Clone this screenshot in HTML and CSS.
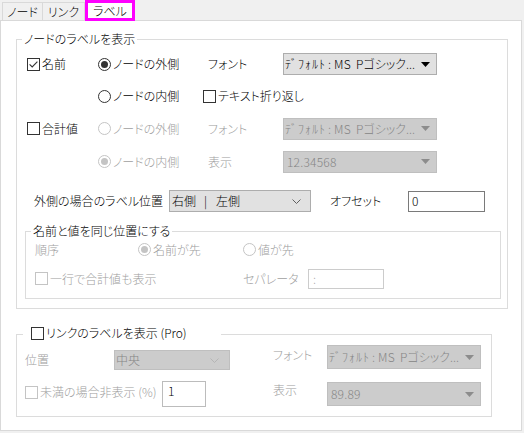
FILE: index.html
```html
<!DOCTYPE html>
<html lang="ja">
<head>
<meta charset="utf-8">
<link rel="stylesheet" href="styles.css">
</head>
<body>
<div class="tabs">
  <div class="tab t1">ノード</div>
  <div class="tab t2">リンク</div>
  <div class="tab active">ラベル</div>
</div>
<div class="panel">
  <div class="group g1">
    <div class="gtitle">ノードのラベルを表示</div>
    <div class="grid1">
      <label class="opt"><svg class="box" width="13" height="13" viewBox="0 0 13 13"><rect x="0.5" y="0.5" width="12" height="12" fill="#fff" stroke="#333"/><path d="M2.6 6.4 L5.2 9 L10.4 3.6" fill="none" stroke="#333" stroke-width="1.1"/></svg>名前</label>
      <label class="opt"><svg class="rad" width="13" height="13" viewBox="0 0 13 13"><circle cx="6.5" cy="6.5" r="6" fill="#fff" stroke="#333"/><circle cx="6.5" cy="6.5" r="3.5" fill="#333"/></svg>ノードの外側</label>
      <span class="lbl">フォント</span>
      <div class="dd"><span class="ddt"><span class="hk">ﾃﾞﾌｫﾙﾄ</span><span class="colon">:</span><span class="ms">MS</span>Pゴシック...</span><svg width="9" height="5" viewBox="0 0 9 5"><path d="M0 0H9L4.5 5Z" fill="#000"/></svg></div>

      <span></span>
      <label class="opt"><svg class="rad" width="13" height="13" viewBox="0 0 13 13"><circle cx="6.5" cy="6.5" r="6" fill="#fff" stroke="#333"/></svg>ノードの内側</label>
      <label class="opt span2"><svg class="box" width="13" height="13" viewBox="0 0 13 13"><rect x="0.5" y="0.5" width="12" height="12" fill="#fff" stroke="#333"/></svg>テキスト折り返し</label>

      <label class="opt"><svg class="box" width="13" height="13" viewBox="0 0 13 13"><rect x="0.5" y="0.5" width="12" height="12" fill="#fff" stroke="#333"/></svg>合計値</label>
      <label class="opt dis"><svg class="rad" width="13" height="13" viewBox="0 0 13 13"><circle cx="6.5" cy="6.5" r="6" fill="#fff" stroke="#c4c4c4"/></svg>ノードの外側</label>
      <span class="lbl dis">フォント</span>
      <div class="dd off"><span class="ddt"><span class="hk">ﾃﾞﾌｫﾙﾄ</span><span class="colon">:</span><span class="ms">MS</span>Pゴシック...</span><svg width="9" height="5" viewBox="0 0 9 5"><path d="M0 0H9L4.5 5Z" fill="#8c8c8c"/></svg></div>

      <span></span>
      <label class="opt dis"><svg class="rad" width="13" height="13" viewBox="0 0 13 13"><circle cx="6.5" cy="6.5" r="6" fill="#fff" stroke="#c4c4c4"/><circle cx="6.5" cy="6.5" r="3.5" fill="#c4c4c4"/></svg>ノードの内側</label>
      <span class="lbl dis">表示</span>
      <div class="dd off"><span class="ddt num">12.34568</span><svg width="9" height="5" viewBox="0 0 9 5"><path d="M0 0H9L4.5 5Z" fill="#8c8c8c"/></svg></div>
    </div>

    <div class="posrow">
      <span class="poslbl">外側の場合のラベル位置</span>
      <div class="combo"><span class="ctext">右側<span class="bar">|</span>左側</span><svg width="9" height="5" viewBox="0 0 9 5"><path d="M0.5 0.5L4.5 4.5L8.5 0.5" fill="none" stroke="#606060"/></svg></div>
      <span class="offlbl">オフセット</span>
      <div class="inp">0</div>
    </div>

    <div class="group g1b">
      <div class="gtitle">名前と値を同じ位置にする</div>
      <div class="grid2 dis">
        <span>順序</span>
        <label class="opt"><svg class="rad" width="13" height="13" viewBox="0 0 13 13"><circle cx="6.5" cy="6.5" r="6" fill="#fff" stroke="#c4c4c4"/><circle cx="6.5" cy="6.5" r="3.5" fill="#c4c4c4"/></svg>名前が先</label>
        <label class="opt span2"><svg class="rad" width="13" height="13" viewBox="0 0 13 13"><circle cx="6.5" cy="6.5" r="6" fill="#fff" stroke="#c4c4c4"/></svg>値が先</label>

        <label class="opt span2"><svg class="box" width="13" height="13" viewBox="0 0 13 13"><rect x="0.5" y="0.5" width="12" height="12" fill="#fff" stroke="#c4c4c4"/></svg>一行で合計値も表示</label>
        <span>セパレータ</span>
        <div class="inp sep">:</div>
      </div>
    </div>
  </div>

  <div class="group g2">
    <div class="gtitle g2title"><label class="opt"><svg class="box" width="13" height="13" viewBox="0 0 13 13"><rect x="0.5" y="0.5" width="12" height="12" fill="#fff" stroke="#333"/></svg>リンクのラベルを表示 (Pro)</label></div>
    <div class="grid3 dis">
      <span class="l1">位置</span>
      <div class="cb off small"><span>中央</span><svg width="9" height="5" viewBox="0 0 9 5"><path d="M0.5 0.5L4.5 4.5L8.5 0.5" fill="none" stroke="#b5b5b5"/></svg></div>
      <span></span>
      <span class="l2">フォント</span>
      <div class="dd off tall top"><span class="ddt"><span class="hk">ﾃﾞﾌｫﾙﾄ</span><span class="colon">:</span><span class="ms">MS</span>Pゴシック...</span><svg width="9" height="5" viewBox="0 0 9 5"><path d="M0 0H9L4.5 5Z" fill="#8c8c8c"/></svg></div>

      <div class="hide span2">
        <label class="opt hidelbl"><svg class="box" width="13" height="13" viewBox="0 0 13 13"><rect x="0.5" y="0.5" width="12" height="12" fill="#fff" stroke="#c4c4c4"/></svg>未満の場合非表示 (%)</label>
        <div class="inp pct">1</div>
      </div>
      <span></span>
      <span class="l3">表示</span>
      <div class="dd off tall"><span class="ddt num">89.89</span><svg width="9" height="5" viewBox="0 0 9 5"><path d="M0 0H9L4.5 5Z" fill="#8c8c8c"/></svg></div>
    </div>
  </div>
</div>
</body>
</html>
```

FILE: styles.css
```css
* { box-sizing: border-box; }
html, body { margin: 0; padding: 0; }
body {
  width: 524px;
  height: 433px;
  overflow: hidden;
  background: #f0f0f0;
  font-family: "Noto Sans CJK JP", "Noto Sans", sans-serif;
  font-size: 12px;
  font-weight: 300;
  line-height: 16px;
  color: #000;
  font-feature-settings: "palt";
}
svg { display: block; flex: none; }

.tabs {
  display: flex;
  align-items: flex-end;
  height: 20px;
  padding-left: 2px;
}
.tab {
  height: 18px;
  border: 1px solid #d9d9d9;
  border-bottom: none;
  background: #f0f0f0;
  display: flex;
  align-items: center;
  justify-content: center;
  white-space: nowrap;
}
.t1 { width: 41px; }
.t2 { width: 43px; margin-left: -1px; }
.tab.active {
  width: 50px;
  height: 21px;
  margin-bottom: -1px;
  background: #fff;
  border: 3px solid #ff00ff;
  position: relative;
  z-index: 1;
}

.panel {
  width: 522px;
  height: 411px;
  background: #fff;
  border: 1px solid #d9d9d9;
  padding: 18px 0 0 15px;
}

.group {
  position: relative;
  border: 1px solid #dcdcdc;
}
.gtitle {
  position: absolute;
  top: -9px;
  left: 5px;
  padding: 0 2px;
  background: #fff;
  line-height: 16px;
  white-space: nowrap;
  color: #000;
}
.dis { color: #a0a0a0; }

.opt {
  display: flex;
  align-items: center;
  gap: 2px;
  white-space: nowrap;
}
.span2 { grid-column: span 2; }

.g1 {
  width: 492px;
  height: 270px;
  padding-top: 8px;
}
.grid1 {
  display: grid;
  grid-template-columns: 71px 105px 80px 154px;
  grid-template-rows: 32px 32px 33px 33px;
  padding-left: 10px;
  align-items: center;
}
.lbl { padding-left: 5px; }

.dd, .combo, .cb {
  display: flex;
  align-items: center;
  justify-content: space-between;
  height: 22px;
  background: #e1e1e1;
  border: 1px solid #adadad;
  padding: 0 6px 0 1px;
  white-space: nowrap;
}
.ddt { display: flex; align-items: center; }
.hk { letter-spacing: 1px; }
.colon { margin: 0 3px 0 2px; }
.ms { margin-right: 5px; letter-spacing: 0.3px; }
.num { padding-left: 2px; letter-spacing: 0.2px; }
.dd.off, .cb.off {
  background: #cccccc;
  border-color: #bfbfbf;
  color: #858585;
}

.posrow {
  display: flex;
  align-items: center;
  height: 22px;
  margin-top: 12px;
  padding-left: 17px;
}
.poslbl { width: 135px; white-space: nowrap; }
.combo {
  width: 142px;
  padding: 0 9px 0 2px;
}
.ctext { display: flex; align-items: center; }
.bar { margin: 0 9px 0 8px; }
.offlbl { margin-left: 19px; width: 78px; }
.inp {
  width: 77px;
  height: 21px;
  border: 1px solid #7a7a7a;
  background: #fff;
  padding: 1px 3px;
  line-height: 16px;
}

.g1b {
  width: 476px;
  height: 68px;
  margin: 19px 0 0 8px;
  padding-top: 3px;
}
.grid2 {
  display: grid;
  grid-template-columns: 103px 105px 65px 76px;
  grid-template-rows: 29px 29px;
  padding-left: 9px;
  align-items: center;
}
.inp.sep {
  width: 76px;
  height: 20px;
  border-color: #cccccc;
  color: #a0a0a0;
  line-height: 16px;
  padding: 1px 4px;
}

.g2 {
  width: 476px;
  height: 83px;
  margin-top: 25px;
  padding-top: 10px;
}
.g2title {
  top: -10px;
  left: 6px;
  padding: 0 34px 0 8px;
}
.grid3 {
  display: grid;
  grid-template-columns: 89px 116px 43px 54px 154px;
  grid-template-rows: 25px 26px;
  row-gap: 11px;
  padding-left: 8px;
  align-items: center;
}
.l1 { align-self: end; padding-bottom: 2px; }
.l2 { align-self: start; padding-top: 2px; }
.l3 { align-self: start; padding-top: 1px; }
.cb.small {
  height: 20px;
  align-self: end;
  padding: 0 10px 0 1px;
}
.dd.tall { height: 24px; }
.dd.top { align-self: start; }
.hide {
  display: flex;
  align-items: center;
}
.hidelbl { width: 137px; padding-bottom: 4px; }
.inp.pct {
  width: 44px;
  height: 26px;
  border-color: #bcbcbc;
  color: #000;
  padding: 1px 5px;
}
```
